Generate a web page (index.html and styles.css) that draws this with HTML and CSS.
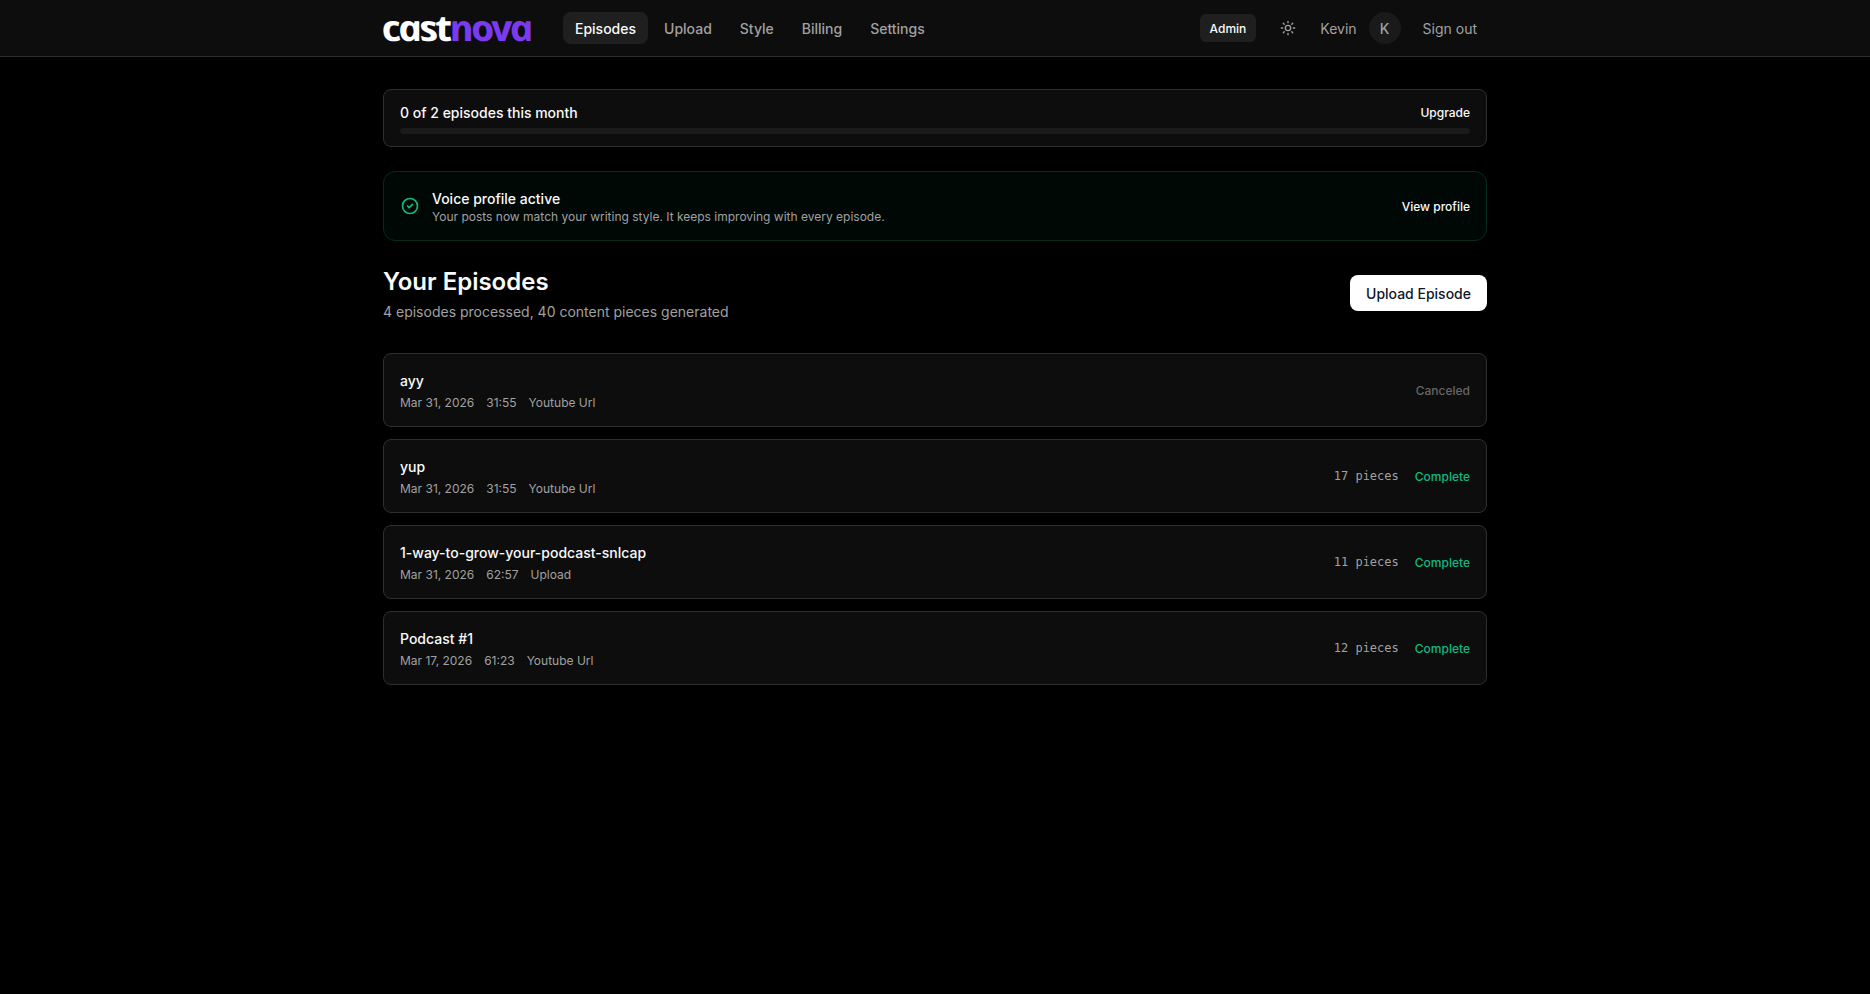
FILE: index.html
```html
<!DOCTYPE html>
<html lang="en">
<head>
    <meta charset="UTF-8">
    <meta name="viewport" content="width=device-width, initial-scale=1.0">
    <title>Your Episodes - castnova</title>
    <link rel="stylesheet" href="styles.css">
</head>
<body>

<header class="site-header">
    <div class="container header-inner">
        <a class="logo" href="#">cast<span>nova</span></a>
        <nav class="main-nav">
            <a class="nav-link active" href="#">Episodes</a>
            <a class="nav-link" href="#">Upload</a>
            <a class="nav-link" href="#">Style</a>
            <a class="nav-link" href="#">Billing</a>
            <a class="nav-link" href="#">Settings</a>
        </nav>
        <div class="header-actions">
            <a class="admin-btn" href="#">Admin</a>
            <button class="theme-toggle" aria-label="Toggle theme">
                <svg width="16" height="16" viewBox="0 0 24 24" fill="none" stroke="currentColor" stroke-width="2" stroke-linecap="round" stroke-linejoin="round">
                    <circle cx="12" cy="12" r="4"/>
                    <path d="M12 2v2M12 20v2M4.93 4.93l1.41 1.41M17.66 17.66l1.41 1.41M2 12h2M20 12h2M6.34 17.66l-1.41 1.41M19.07 4.93l-1.41 1.41"/>
                </svg>
            </button>
            <span class="user-name">Kevin</span>
            <span class="avatar">K</span>
            <button class="sign-out">Sign out</button>
        </div>
    </div>
</header>

<main class="container content">
    <!-- Monthly usage -->
    <section class="usage-card">
        <div class="usage-row">
            <span class="usage-text">0 of 2 episodes this month</span>
            <a class="text-link" href="#">Upgrade</a>
        </div>
        <div class="usage-track"></div>
    </section>

    <!-- Voice profile banner -->
    <section class="voice-card">
        <svg class="voice-icon" width="20" height="20" viewBox="0 0 24 24" fill="none" stroke="currentColor" stroke-width="2" stroke-linecap="round" stroke-linejoin="round">
            <path d="M9 12l2 2 4-4m6 2a9 9 0 11-18 0 9 9 0 0118 0z"/>
        </svg>
        <div class="voice-body">
            <p class="voice-title">Voice profile active</p>
            <p class="voice-text">Your posts now match your writing style. It keeps improving with every episode.</p>
        </div>
        <a class="text-link" href="#">View profile</a>
    </section>

    <div class="page-head">
        <div class="page-title">
            <h1>Your Episodes</h1>
            <p>4 episodes processed, 40 content pieces generated</p>
        </div>
        <a class="upload-btn" href="#">Upload Episode</a>
    </div>

    <!-- Episode list -->
    <div class="episode-list">
        <a class="episode-card" href="#">
            <div class="episode-info">
                <h3>ayy</h3>
                <div class="meta"><span>Mar 31, 2026</span><span>31:55</span><span>Youtube Url</span></div>
            </div>
            <div class="episode-status">
                <span class="status canceled">Canceled</span>
            </div>
        </a>
        <a class="episode-card" href="#">
            <div class="episode-info">
                <h3>yup</h3>
                <div class="meta"><span>Mar 31, 2026</span><span>31:55</span><span>Youtube Url</span></div>
            </div>
            <div class="episode-status">
                <span class="pieces">17 pieces</span>
                <span class="status complete">Complete</span>
            </div>
        </a>
        <a class="episode-card" href="#">
            <div class="episode-info">
                <h3>1-way-to-grow-your-podcast-snlcap</h3>
                <div class="meta"><span>Mar 31, 2026</span><span>62:57</span><span>Upload</span></div>
            </div>
            <div class="episode-status">
                <span class="pieces">11 pieces</span>
                <span class="status complete">Complete</span>
            </div>
        </a>
        <a class="episode-card" href="#">
            <div class="episode-info">
                <h3>Podcast #1</h3>
                <div class="meta"><span>Mar 17, 2026</span><span>61:23</span><span>Youtube Url</span></div>
            </div>
            <div class="episode-status">
                <span class="pieces">12 pieces</span>
                <span class="status complete">Complete</span>
            </div>
        </a>
    </div>
</main>

</body>
</html>
```
FILE: styles.css
```css
* {
    box-sizing: border-box;
    margin: 0;
    padding: 0;
}

body {
    font-family: Inter, sans-serif;
    font-size: 14px;
    line-height: 20px;
    background: #000;
    color: #fafafa;
    min-height: 100vh;
}

a {
    color: inherit;
    text-decoration: none;
}

button {
    font: inherit;
    color: inherit;
    background: none;
    border: none;
    cursor: pointer;
}

.container {
    max-width: 1152px;
    margin: 0 auto;
    padding: 0 24px;
}

/* Header */
.site-header {
    background: #0d0d0d;
    border-bottom: 1px solid #2e2e2e;
}

.header-inner {
    display: flex;
    align-items: center;
    height: 56px;
}

/* Italic set upright again, for the single-storey a */
.logo {
    width: 148px;
    margin-right: 32px;
    font-family: "Open Sans", sans-serif;
    font-size: 36px;
    font-style: italic;
    font-weight: 700;
    line-height: 54px;
    letter-spacing: -2.5px;
    text-indent: -2px;
    white-space: nowrap;
    color: #fff;
    transform: scaleX(1.12) skewX(12deg);
    transform-origin: left center;
}

.logo span {
    color: #7c3aed;
}

.main-nav {
    display: flex;
    gap: 4px;
}

.nav-link {
    padding: 7px 12px 5px;
    border-radius: 8px;
    font-weight: 500;
    color: #a1a1a1;
}

.nav-link.active {
    background: #1f1f1f;
    color: #fafafa;
}

.header-actions {
    display: flex;
    align-items: center;
    margin-left: auto;
    color: #a1a1a1;
}

.admin-btn {
    padding: 7px 10px 5px;
    border-radius: 6px;
    background: #1f1f1f;
    color: #fafafa;
    font-size: 12px;
    font-weight: 500;
    line-height: 16px;
}

.theme-toggle {
    display: flex;
    padding: 8px;
    margin: 0 16px;
}

.user-name {
    padding-top: 2px;
}

.avatar {
    width: 32px;
    height: 32px;
    margin: 0 10px 0 12px;
    border-radius: 50%;
    background: #1a1a1a;
    font-weight: 500;
    line-height: 34px;
    text-align: center;
}

.sign-out {
    padding: 7px 10px 5px 12px;
}

/* Page content */
.content {
    padding-top: 32px;
}

.text-link {
    padding-top: 2px;
    font-size: 12px;
    font-weight: 500;
    line-height: 16px;
}

.usage-card {
    padding: 13px 16px 12px;
    margin-bottom: 24px;
    border: 1px solid #2e2e2e;
    border-radius: 8px;
    background: #0d0d0d;
}

.usage-row {
    display: flex;
    justify-content: space-between;
    align-items: center;
    margin-bottom: 5px;
}

.usage-row .text-link {
    padding-top: 0;
}

.usage-text {
    font-weight: 500;
}

.usage-track {
    height: 6px;
    border-radius: 3px;
    background: #1a1a1a;
}

.voice-card {
    display: flex;
    align-items: center;
    gap: 12px;
    height: 70px;
    padding: 0 16px;
    margin-bottom: 24px;
    border: 1px solid #022c1e;
    border-radius: 12px;
    background: #000805;
}

.voice-icon {
    color: #10b981;
}

.voice-body {
    flex: 1;
    padding-top: 2px;
}

.voice-title {
    font-weight: 500;
}

.voice-text {
    font-size: 12px;
    line-height: 16px;
    color: #a1a1a1;
}

.page-head {
    display: flex;
    justify-content: space-between;
    align-items: center;
    height: 56px;
    margin-bottom: 32px;
}

.page-title {
    padding-top: 2px;
}

.page-head h1 {
    font-size: 24px;
    font-weight: 600;
    line-height: 32px;
    margin-bottom: 4px;
}

.page-head p {
    color: #a1a1a1;
}

.upload-btn {
    padding: 9px 16px 7px;
    border-radius: 8px;
    background: #fff;
    color: #0f172a;
    font-weight: 500;
}

/* Episode cards */
.episode-list {
    display: flex;
    flex-direction: column;
    gap: 12px;
}

.episode-card {
    display: flex;
    justify-content: space-between;
    align-items: center;
    height: 74px;
    padding: 0 16px;
    border: 1px solid #2e2e2e;
    border-radius: 8px;
    background: #0d0d0d;
}

.episode-info {
    padding-top: 2px;
}

.episode-card h3 {
    font-size: 14px;
    font-weight: 500;
    line-height: 20px;
    margin-bottom: 4px;
}

.meta {
    display: flex;
    gap: 12px;
    font-size: 12px;
    line-height: 16px;
    color: #a1a1a1;
}

.episode-status {
    display: flex;
    align-items: center;
    gap: 16px;
    font-size: 12px;
    line-height: 16px;
}

.pieces {
    font-family: "DejaVu Sans Mono", monospace;
    color: #a1a1a1;
}

.status {
    padding-top: 2px;
    font-weight: 500;
}

.status.complete {
    color: #10b981;
}

.status.canceled {
    color: #666;
}
```
